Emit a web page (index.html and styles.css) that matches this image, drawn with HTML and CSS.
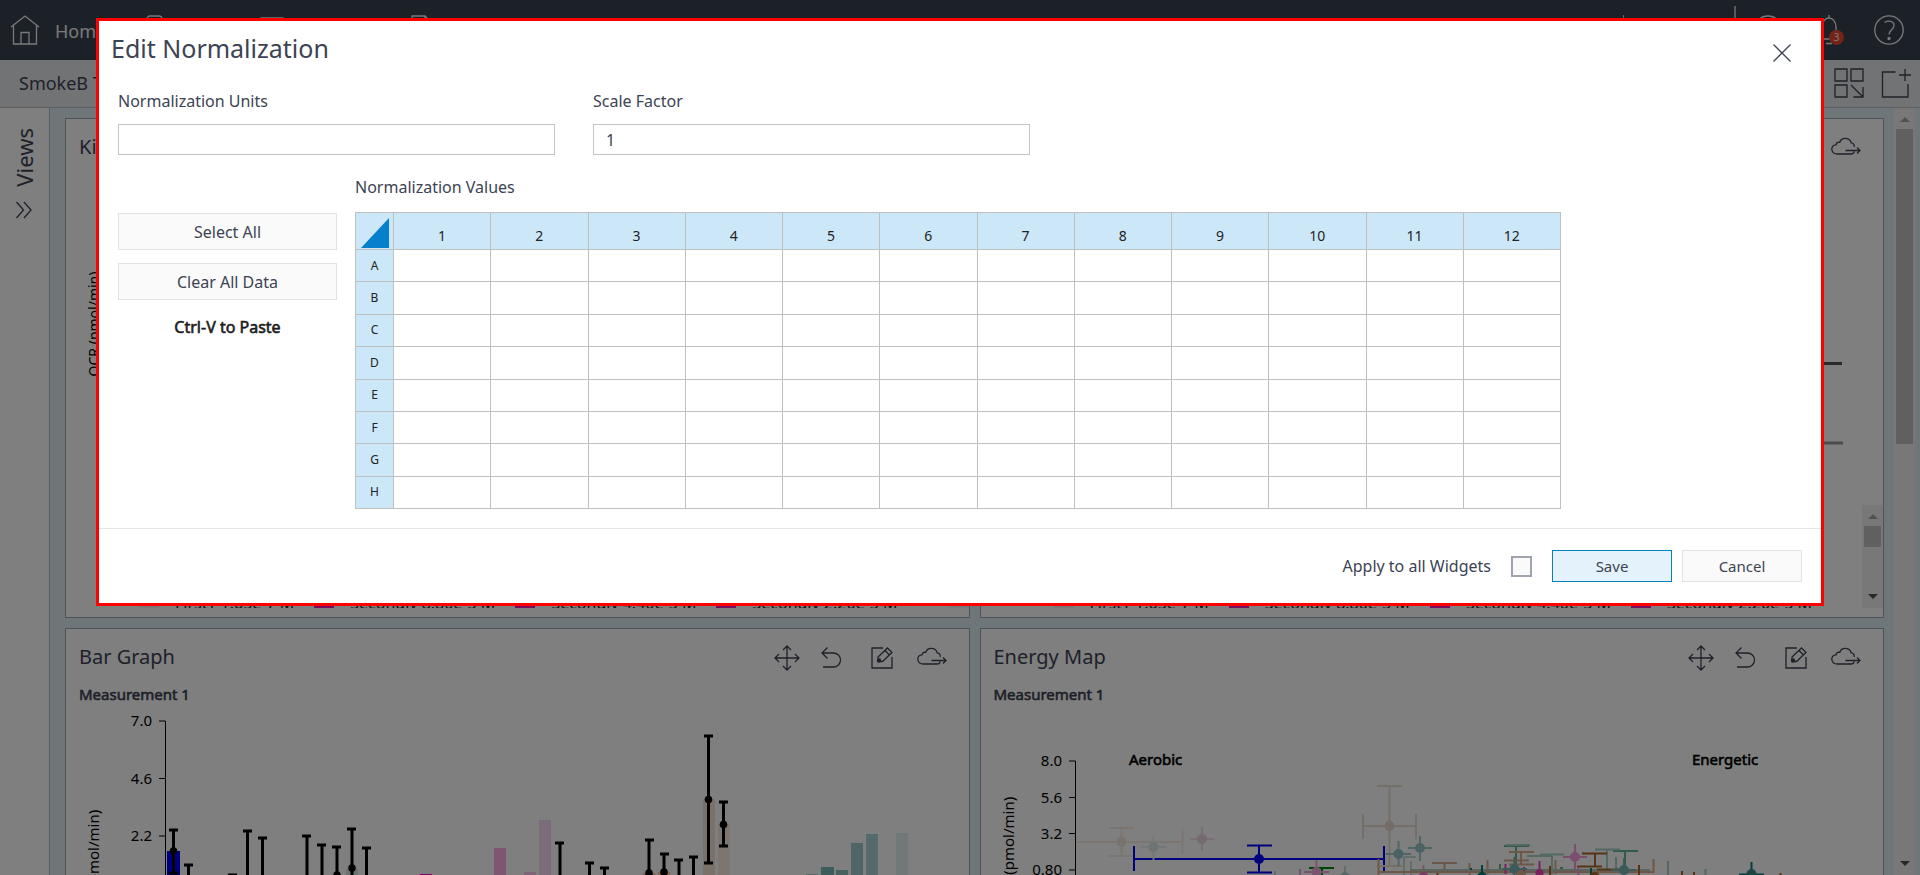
FILE: index.html
```html
<!DOCTYPE html>
<html lang="en">
<head>
<meta charset="utf-8">
<title>Edit Normalization</title>
<link rel="stylesheet" href="styles.css">
</head>
<body>
<svg class="sprite" aria-hidden="true">
  <symbol id="i-move" viewBox="0 0 30 30"><path d="M15 3v24M3 15h24M11 7l4-4 4 4M11 23l4 4 4-4M7 11l-4 4 4 4M23 11l4 4-4 4"/></symbol>
  <symbol id="i-undo" viewBox="0 0 30 30"><path d="M10.500 4.500L5 10l5.500 5.500M5 10h11.500a7 7 0 0 1 0 14H6"/></symbol>
  <symbol id="i-edit" viewBox="0 0 30 30"><path d="M16 5H5v20h20V14"/><path d="M11 18.500v-4.500l9.500-9 4.500 4.500-9.500 9zM18 7.500l4.500 4.500"/><circle cx="12" cy="17.500" r="1.500" class="solid"/></symbol>
  <symbol id="i-cloud" viewBox="0 0 30 30"><path d="M23 18.500c0 2-1 2.500-3 2.500H6.500C3 21 .800 19 .800 16.300c0-2.400 1.700-4.300 4.200-4.500.300-2 2-2.900 3.800-2.500C9.500 7 11.500 5.300 14 5.300c3.500 0 5.500 1.700 6.200 4.600 2.300.200 3.300 1.700 3 4M14.500 17.500H29M26 14.500l3 3-3 3"/></symbol>
</svg>

<div class="app">
  <header class="topbar">
    <a class="home" href="#">
      <svg class="icon" width="30" height="30" viewBox="0 0 30 30"><path d="M1 12L15 1l14 11M3.500 10v19h23V10M11 29V17.500h8V29"/></svg>
      <span>Home</span>
    </a>
    <nav class="tabs">
      <svg class="icon" width="30" height="30" viewBox="0 0 30 30"><rect x="7" y="1" width="15" height="28" rx="3"/></svg>
      <svg class="icon" width="30" height="30" viewBox="0 0 30 30"><path d="M4 3h22v24H4z"/></svg>
      <svg class="icon icon-file" width="30" height="30" viewBox="0 0 30 30"><path d="M6 29V1h13l5 5v23zM19 1v5h5"/></svg>
    </nav>
    <span class="tick"></span>
    <span class="divider"></span>
    <svg class="icon" width="30" height="30" viewBox="0 0 30 30"><circle cx="15" cy="15" r="14"/></svg>
    <button class="bell" type="button" aria-label="Notifications">
      <svg class="icon" width="30" height="30" viewBox="0 0 30 30"><path d="M3 24h24M6 24c2-3 2-6 2-12 0-5 3-9 7-9s7 4 7 9 0 9 2 12M15 3V0M12 28.500h6"/></svg>
      <span class="badge">3</span>
    </button>
    <button class="help" type="button" aria-label="Help">
      <svg class="icon" width="30" height="30" viewBox="0 0 30 30"><circle cx="15" cy="15" r="14.200"/><path d="M10.500 7.500c4-2.500 9.500-1.500 9.500 3 0 4-5 4.500-5 9"/><circle cx="15" cy="23.500" r="1" class="solid"/></svg>
    </button>
  </header>

  <div class="subbar">
    <span class="project">SmokeB Test</span>
    <svg class="icon" width="30" height="30" viewBox="0 0 30 30"><path d="M1 1h12v12H1zM17 1h12v12H17zM1 17h12v12H1zM17 17l11.500 11.500M29 19v10H19.500"/></svg>
    <svg class="icon" width="30" height="30" viewBox="0 0 30 30"><path d="M14.500 4H1.500v25H27V16M24 1v12M18 7h12"/></svg>
  </div>

  <div class="main">
    <aside class="views">
      <span class="views-label">Views</span>
      <svg class="icon" width="18" height="18" viewBox="0 0 18 18"><path d="M1.500 1l7 8-7 8M9 1l7 8-7 8"/></svg>
    </aside>

    <div class="board">
      <section class="card">
        <div class="card-head">
          <h2>Kinetic Graph</h2>
          <div class="tools">
            <button type="button" aria-label="Move"><svg><use href="#i-move"/></svg></button>
            <button type="button" aria-label="Undo"><svg><use href="#i-undo"/></svg></button>
            <button type="button" aria-label="Edit"><svg><use href="#i-edit"/></svg></button>
            <button type="button" aria-label="Export"><svg><use href="#i-cloud"/></svg></button>
          </div>
        </div>
        <svg class="kinetic" viewBox="79 168 880 320" width="880" height="320">
          <text transform="translate(99 324) rotate(-90)" text-anchor="middle">OCR (pmol/min)</text>
        </svg>
        <div class="legend-box">
          <ul class="legend">
            <li><i class="pale"></i>FirstT 1.65e-7 M</li>
            <li><i></i>Secondly 8.80e-5 M</li>
            <li><i></i>Secondly 4.40e-5 M</li>
            <li><i></i>Secondly 2.20e-5 M</li>
          </ul>
          <div class="scroll small"><b class="up"></b><b class="thumb"></b><b class="down"></b></div>
        </div>
      </section>

      <section class="card">
        <div class="card-head">
          <h2>Kinetic Graph</h2>
          <div class="tools">
            <button type="button" aria-label="Move"><svg><use href="#i-move"/></svg></button>
            <button type="button" aria-label="Undo"><svg><use href="#i-undo"/></svg></button>
            <button type="button" aria-label="Edit"><svg><use href="#i-edit"/></svg></button>
            <button type="button" aria-label="Export"><svg><use href="#i-cloud"/></svg></button>
          </div>
        </div>
        <svg class="kinetic" viewBox="994 168 880 320" width="880" height="320" fill="none" stroke-width="3">
          <path d="M1700 363.500H1842" stroke="#555"/>
          <path d="M1700 443H1843" stroke="#999"/>
        </svg>
        <div class="legend-box">
          <ul class="legend">
            <li><i class="pale"></i>FirstT 1.65e-7 M</li>
            <li><i></i>Secondly 8.80e-5 M</li>
            <li><i></i>Secondly 4.40e-5 M</li>
            <li><i></i>Secondly 2.20e-5 M</li>
          </ul>
          <div class="scroll small"><b class="up"></b><b class="thumb"></b><b class="down"></b></div>
        </div>
      </section>

      <section class="card">
        <div class="card-head">
          <h2>Bar Graph</h2>
          <div class="tools">
            <button type="button" aria-label="Move"><svg><use href="#i-move"/></svg></button>
            <button type="button" aria-label="Undo"><svg><use href="#i-undo"/></svg></button>
            <button type="button" aria-label="Edit"><svg><use href="#i-edit"/></svg></button>
            <button type="button" aria-label="Export"><svg><use href="#i-cloud"/></svg></button>
          </div>
        </div>
        <p class="measure">Measurement 1</p>
        <svg class="chart" viewBox="79 706 880 380" width="880" height="380">
          <path d="M159 721h6.500V1050M159 778.500h6M159 836h6" fill="none" stroke="#000"/>
          <g text-anchor="end"><text x="152" y="726">7.0</text><text x="152" y="784">4.6</text><text x="152" y="841">2.2</text></g>
          <text transform="translate(99 866) rotate(-90)" text-anchor="middle">OCR (pmol/min)</text>
          <path d="M167 851h13v200h-13z" fill="#00f"/>
          <path d="M346 869h12v99h-12z" fill="#cfe8e4"/>
          <path d="M494 848h12v180h-12z" fill="#ffaae8"/>
          <path d="M420 874h12v180h-12z" fill="#f0c"/>
          <path d="M524 872h12v180h-12z" fill="#ffc8f0"/>
          <path d="M539 820h12v230h-12z" fill="#f8d8f4"/>
          <path d="M643 873h12v99h-12zM658 872h12v99h-12z" fill="#f0c8a0"/>
          <path d="M703 799h12v250h-12z" fill="#f4e4d0"/>
          <path d="M718 824h12v250h-12z" fill="#f8eae0"/>
          <path d="M806 874h12v99h-12z" fill="#a8d8d4"/>
          <path d="M821 867h13v99h-13z" fill="#78bab8"/>
          <path d="M836 870h12v99h-12z" fill="#90c4c2"/>
          <path d="M851 843h12v150h-12z" fill="#a0cccc"/>
          <path d="M866 834h12v150h-12z" fill="#aad4d4"/>
          <path d="M896 833h12v150h-12z" fill="#e2f0ee"/>
          <g fill="none" stroke="#000" stroke-width="3">
            <path d="M169 830h9M173.500 830v42M169 873h9M184 865h9M188.500 865v99M228 875h9M243 831h9M247.500 831v99M258 838h9M262.500 838v99M302 836h9M307 836v99M317 845h9M322 845v99M332 847h9M337 847v99M347 829h9M352 829v99M362 848h9M366.500 848v99"/>
            <path d="M555 843h9M560 843v99M585 863h9M589.500 863v99M600 868h9M604.500 868v99M645 840h9M649 840v99M660 854h9M664 854v99M674 860h9M679 860v99M689 857h9M693.500 857v99M704 736h9M708.500 736v126M704 863h9M719 802h9M723.500 802v44M719 846h9"/>
          </g>
          <circle cx="173.500" cy="851" r="3.800"/><circle cx="337" cy="875" r="3.800"/><circle cx="352" cy="868" r="3.800"/><circle cx="649" cy="873" r="3.800"/><circle cx="664" cy="872" r="3.800"/><circle cx="708.500" cy="799.500" r="3.800"/><circle cx="723.500" cy="824.500" r="3.800"/>
        </svg>
      </section>

      <section class="card">
        <div class="card-head">
          <h2>Energy Map</h2>
          <div class="tools">
            <button type="button" aria-label="Move"><svg><use href="#i-move"/></svg></button>
            <button type="button" aria-label="Undo"><svg><use href="#i-undo"/></svg></button>
            <button type="button" aria-label="Edit"><svg><use href="#i-edit"/></svg></button>
            <button type="button" aria-label="Export"><svg><use href="#i-cloud"/></svg></button>
          </div>
        </div>
        <p class="measure">Measurement 1</p>
        <svg class="chart" viewBox="994 706 880 380" width="880" height="380">
          <path d="M1069 761h6.500V1050M1069 797.500h6M1069 833.500h6M1069 870h6" fill="none" stroke="#000"/>
          <g text-anchor="end"><text x="1062" y="766">8.0</text><text x="1062" y="803">5.6</text><text x="1062" y="839">3.2</text><text x="1062" y="875">0.80</text></g>
          <text transform="translate(1014 853) rotate(-90)" text-anchor="middle">OCR (pmol/min)</text>
          <text class="strong" x="1129" y="765">Aerobic</text>
          <text class="strong" x="1692" y="765">Energetic</text>
          <g fill="none" stroke-width="2">
            <path d="M1076 842h106.500M1182.500 829v25M1121.500 828v28M1109 828h25M1109 856h25" stroke="#f6ece4"/>
            <path d="M1134 859h250M1134 846v25M1384 846v25M1259 845.500V873M1247 845.500h25M1247 872.500h25" stroke="#00f"/>
            <path d="M1141 847h25M1153.500 835v25" stroke="#e6f0f0"/>
            <path d="M1190 839h24M1202 827v24" stroke="#f0dcea"/>
            <path d="M1363 826h53M1363 814v25M1416 814v25M1389.500 786v80M1377 786h25M1377 866h25" stroke="#ebdfd4"/>
            <path d="M1411 861v14M1404 857h12M1404 857v18" stroke="#c4dcd6"/>
            <path d="M1386 854h25M1398.500 841v25M1408 848h24M1420 836v25" stroke="#a0cccc"/>
            <path d="M1309 868h25M1322 868v8" stroke="#008a00"/>
            <path d="M1304 872h25M1316.500 860v16M1300 869v7M1423.500 865v10" stroke="#f4a8dc"/>
            <path d="M1275 871v6M1345 866v10" stroke="#c4dcda"/>
            <path d="M1378.500 872H1653M1378.500 859v16M1653.500 859v14M1432 863h25M1444.500 863v9M1469.500 863v12M1487.500 860v14M1555.500 860v14" stroke="#d8ae90"/>
            <path d="M1410 870H1650" stroke="#b0c8ba"/>
            <path d="M1504 846h25M1516 846v22M1613 851h25M1625 851v20M1500 864v5M1560 868h3" stroke="#64b496"/>
            <path d="M1506 845h24M1527 856h25M1540 854.500h24M1552 856v18M1595 849.500h25M1607 850v20M1616 857v16M1668 861v14M1705.500 869v6" stroke="#a4d4c2"/>
            <path d="M1509 852h25M1521 852v12M1504 860.500h25M1509 864.500h25" stroke="#d8ae90"/>
            <path d="M1582 853.500h25M1595 853.500v12M1577 866.500h25M1597 869.500h23M1550 866v9M1639 865v10M1682 871v4M1694 872v3M1780.500 873v3M1437.500 873v3" stroke="#b06828"/>
            <path d="M1539.500 861v12M1505.500 864v10M1524 867v8" stroke="#f040c0"/>
            <path d="M1563 857h24M1575 844v25M1578.500 867v8" stroke="#f49cdc"/>
            <path d="M1502 869h25M1514.500 857v18M1611 870h25M1624 858v17" stroke="#74b4b4"/>
            <path d="M1482 865v10M1591 868v7M1471 868v2M1751.500 862v14M1739 874.500h25" stroke="#00807c"/>
          </g>
          <circle cx="1121.500" cy="842" r="5" fill="#f2e6de"/><circle cx="1153.500" cy="847" r="5" fill="#d8e8e8"/><circle cx="1202" cy="839" r="5" fill="#ecd4e4"/>
          <circle cx="1259" cy="859" r="5" fill="#00f"/><circle cx="1389.500" cy="826" r="5" fill="#e8dace"/><circle cx="1398.500" cy="854" r="5" fill="#98c4c4"/><circle cx="1420" cy="848" r="5" fill="#98c4c4"/>
          <circle cx="1316.500" cy="872" r="5" fill="#f4a8dc"/><circle cx="1345" cy="877" r="5" fill="#b4d4d2"/><circle cx="1423.500" cy="877" r="5" fill="#f07cd0"/><circle cx="1482" cy="877" r="5" fill="#00807c"/>
          <circle cx="1514.500" cy="869" r="5" fill="#74b4b4"/><circle cx="1521" cy="875" r="5" fill="#d8ae90"/><circle cx="1539.500" cy="873" r="4" fill="#f040c0"/><circle cx="1575" cy="857" r="5" fill="#f49cdc"/><circle cx="1595" cy="877" r="5" fill="#b06828"/>
          <circle cx="1624" cy="870" r="5" fill="#74b4b4"/><circle cx="1751.500" cy="874" r="5" fill="#388c88"/>
        </svg>
      </section>
    </div>
    <div class="scroll page"><b class="up"></b><b class="thumb"></b><b class="down"></b></div>
  </div>
</div>

<div class="overlay">
  <div class="modal" role="dialog" aria-modal="true" aria-labelledby="dlg-title">
    <div class="modal-head">
      <h1 id="dlg-title">Edit Normalization</h1>
      <button class="close" type="button" aria-label="Close"><svg width="18" height="18" viewBox="0 0 18 18"><path d="M.500.500l17 17M17.500.500l-17 17"/></svg></button>
    </div>
    <form class="form">
      <div class="fields">
        <div class="field"><label for="units">Normalization Units</label><input id="units" type="text"></div>
        <div class="field"><label for="factor">Scale Factor</label><input id="factor" type="text" value="1"></div>
      </div>
      <div class="values">
        <div class="actions">
          <button class="btn" type="button">Select All</button>
          <button class="btn" type="button">Clear All Data</button>
          <p class="hint">Ctrl-V to Paste</p>
        </div>
        <div class="plate">
          <p class="plate-title" id="plate-title">Normalization Values</p>
          <table aria-labelledby="plate-title">
            <thead><tr><th class="corner"><svg width="30" height="31" viewBox="0 0 30 31"><path d="M29 1v30H1z"/></svg></th><th>1</th><th>2</th><th>3</th><th>4</th><th>5</th><th>6</th><th>7</th><th>8</th><th>9</th><th>10</th><th>11</th><th>12</th></tr></thead>
            <tbody>
              <tr><th>A</th><td></td><td></td><td></td><td></td><td></td><td></td><td></td><td></td><td></td><td></td><td></td><td></td></tr>
              <tr><th>B</th><td></td><td></td><td></td><td></td><td></td><td></td><td></td><td></td><td></td><td></td><td></td><td></td></tr>
              <tr><th>C</th><td></td><td></td><td></td><td></td><td></td><td></td><td></td><td></td><td></td><td></td><td></td><td></td></tr>
              <tr><th>D</th><td></td><td></td><td></td><td></td><td></td><td></td><td></td><td></td><td></td><td></td><td></td><td></td></tr>
              <tr><th>E</th><td></td><td></td><td></td><td></td><td></td><td></td><td></td><td></td><td></td><td></td><td></td><td></td></tr>
              <tr><th>F</th><td></td><td></td><td></td><td></td><td></td><td></td><td></td><td></td><td></td><td></td><td></td><td></td></tr>
              <tr><th>G</th><td></td><td></td><td></td><td></td><td></td><td></td><td></td><td></td><td></td><td></td><td></td><td></td></tr>
              <tr><th>H</th><td></td><td></td><td></td><td></td><td></td><td></td><td></td><td></td><td></td><td></td><td></td><td></td></tr>
            </tbody>
          </table>
        </div>
      </div>
    </form>
    <div class="modal-foot">
      <label for="all">Apply to all Widgets</label>
      <input id="all" class="check" type="checkbox">
      <button class="btn small primary" type="button">Save</button>
      <button class="btn small" type="button">Cancel</button>
    </div>
  </div>
</div>
</body>
</html>
```
FILE: styles.css
```css
* { box-sizing: border-box; }
body { margin: 0; font-family: "Noto Sans", "Open Sans", sans-serif; font-size: 16px; line-height: 24px; color: #3c4352; overflow: hidden; }
h1, h2, p, ul { margin: 0; padding: 0; font-weight: 400; list-style: none; }
button { font: inherit; color: inherit; background: none; border: 0; padding: 0; }
svg { display: block; flex: none; }
.sprite { position: absolute; width: 0; height: 0; }
.icon, .tools svg { fill: none; stroke: currentColor; stroke-width: 1.3; }
.solid { fill: currentColor; }

.app { height: 100vh; display: flex; flex-direction: column; overflow: hidden; background: #dfecf4; }
.topbar { flex: none; height: 60px; display: flex; align-items: center; padding: 0 16px 0 10px; background: #39414e; color: #f4f4f4; }
.home { display: flex; align-items: center; gap: 15px; color: inherit; text-decoration: none; font-size: 18px; }
.home span { padding-top: 2px; }
.tabs { flex: 1; display: flex; gap: 87px; margin-left: 34px; }
.icon-file { margin-left: 32px; }
.tick { width: 1px; height: 30px; margin-right: 110px; background: #c8c8c8; }
.divider { width: 2px; height: 48px; margin-right: 17px; background: #b4b4b4; }
.bell { position: relative; margin: 0 30px 0 31px; }
.badge { position: absolute; left: 15px; top: 15px; width: 15px; height: 15px; border-radius: 50%; background: #e8472c; font-size: 10px; line-height: 15px; text-align: center; }

.subbar { flex: none; height: 48px; display: flex; align-items: center; gap: 17px; padding: 0 9px 1px 19px; background: #e5e6e8; border-bottom: 1px solid #b8bcc0; color: #3c4352; }
.project { flex: 1; font-size: 18px; }

.main { flex: 1; min-height: 0; display: flex; }
.views { flex: none; width: 50px; padding: 20px 2px 0 0; display: flex; flex-direction: column; align-items: center; gap: 14px; background: #fff; border-right: 1px solid #b4bcc4; }
.views-label { writing-mode: vertical-rl; transform: rotate(180deg); font-size: 22px; line-height: 32px; }
.board { flex: 1; min-width: 0; display: grid; grid-template-columns: 1fr 1fr; grid-auto-rows: 500px; gap: 10px; padding: 10px 10px 0 15px; }
.card { min-width: 0; overflow: hidden; display: flex; flex-direction: column; background: #fff; border: 1px solid #98a4b0; }
.card-head { flex: none; display: flex; justify-content: space-between; padding: 13px 22px 0 13px; height: 49px; }
.card-head h2 { font-size: 20px; line-height: 30px; }
.tools { display: flex; gap: 20px; padding-top: 1px; }
.tools button { height: 30px; }
.tools button:first-child { margin-right: -5px; }
.tools svg { width: 30px; height: 30px; }
.measure { padding: 5px 0 0 13px; font-size: 15px; line-height: 23px; -webkit-text-stroke: 0.6px currentColor; }
.chart, .kinetic { margin-left: 13px; font-size: 15px; }
.kinetic { font-size: 14px; }
.chart text, .kinetic text { fill: #000; stroke: none; }
.chart .strong { stroke: #000; stroke-width: 0.6px; }
.legend-box { flex: none; height: 103px; margin-top: auto; margin-bottom: 9px; display: flex; overflow: hidden; }
.legend { flex: 1; display: flex; gap: 20px; padding: 86px 0 0 73px; white-space: nowrap; }
.legend li { display: flex; gap: 16px; color: #222; }
.legend i { width: 20px; height: 18px; background: #f018c0; }
.legend .pale { background: #f4ecf0; }

.scroll { flex: none; width: 21px; display: flex; flex-direction: column; align-items: center; background: #f1f1f1; }
.scroll .up, .scroll .down { flex: none; border: 5px solid transparent; }
.scroll .up { border-top: 0; border-bottom-color: #a3a3a3; margin: 9px 0 7px; }
.scroll .down { border-bottom: 0; border-top-color: #505050; margin: auto 0 9px; }
.scroll .thumb { flex: none; width: 17px; height: 21px; background: #c1c1c1; }
.scroll.page { margin-right: 5px; }
.scroll.page .thumb { height: 315px; }

.overlay { position: fixed; inset: 0; padding: 18px 5%; background: rgba(0, 0, 0, 0.5); }
.modal { background: #fff; border: 3px solid #f00; }
.modal-head { display: flex; justify-content: space-between; align-items: flex-start; padding: 10px 30px 23px 12px; }
.modal-head h1 { font-size: 25px; line-height: 35px; }
.close { padding: 13px 0 0; }
.close svg { fill: none; stroke: #3c4352; stroke-width: 1.3; }
.form { padding: 0 19px 19px; }
.fields { display: flex; gap: 38px; margin-bottom: 20px; }
.field { flex: 0 1 437px; display: flex; flex-direction: column; gap: 11px; }
.field input { height: 31px; padding: 0 12px; border: 1px solid #c4c4c4; font: inherit; color: inherit; outline: 0; }
.values { display: flex; gap: 18px; }
.actions { flex: 0 0 219px; display: flex; flex-direction: column; gap: 13px; padding-top: 38px; }
.btn { height: 37px; background: #fafafa; border: 1px solid #e2e2e2; }
.hint { padding-top: 2px; text-align: center; color: #1c1c20; -webkit-text-stroke: 0.6px currentColor; }
.plate { flex: 0 1 1206px; }
.plate-title { margin-bottom: 13px; }
table { width: 100%; height: 297px; table-layout: fixed; border-collapse: collapse; color: #222; }
th, td { padding: 0; border: 1px solid #bfbfbf; }
th { background: #cce7f8; font-weight: 400; font-size: 12px; line-height: 16px; text-align: center; }
thead th { height: 37px; padding-top: 10px; font-size: 14px; }
thead .corner { width: 38px; padding: 2px 0 0 4px; }
.corner svg { fill: #0480cc; }
.modal-foot { display: flex; align-items: center; justify-content: flex-end; padding: 21px 19px; border-top: 1px solid #e6e6e6; }
.check { appearance: none; width: 21px; height: 21px; margin: 0 20px; border: 2px solid #a0a4b0; background: #fafafa; }
.btn.small { width: 120px; height: 32px; font-size: 15px; }
.btn.primary { margin-right: 10px; background: #e4f3fb; border-color: #0480c4; }
```
